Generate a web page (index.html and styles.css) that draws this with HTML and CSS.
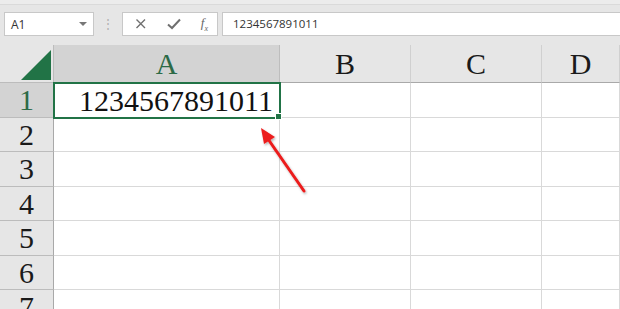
FILE: index.html
```html
<!DOCTYPE html>
<html lang="en">
<head>
  <meta charset="UTF-8" />
  <title>Sheet</title>
  <link rel="stylesheet" href="styles.css">
</head>
<body>
  <div class="toolbar">
    <div class="name-box">
      <span>A1</span>
      <span class="caret"></span>
    </div>
    <div class="grip">&#8942;</div>
    <div class="fx-buttons">
      <svg class="fx-icon" width="14" height="14" viewBox="0 0 14 14">
        <path d="M2.5 2.5 L11 11 M11 2.5 L2.5 11" stroke="#6f6f6f" stroke-width="1.4" fill="none"/>
      </svg>
      <svg class="fx-icon" width="16" height="14" viewBox="0 0 16 14">
        <path d="M2 7.5 L6 11 L14 2.5" stroke="#6f6f6f" stroke-width="2" fill="none"/>
      </svg>
      <span class="fx-text">f<sub>x</sub></span>
    </div>
    <div class="formula-input">1234567891011</div>
  </div>

  <div class="sheet">
    <div class="grid">
      <div class="corner"><span class="corner-tri"></span></div>
      <div class="col-head selected">A</div>
      <div class="col-head">B</div>
      <div class="col-head">C</div>
      <div class="col-head">D</div>

      <div class="row-head selected">1</div>
      <div class="cell active">1234567891011</div>
      <div class="cell"></div><div class="cell"></div><div class="cell"></div>

      <div class="row-head">2</div>
      <div class="cell"></div><div class="cell"></div><div class="cell"></div><div class="cell"></div>
      <div class="row-head">3</div>
      <div class="cell"></div><div class="cell"></div><div class="cell"></div><div class="cell"></div>
      <div class="row-head">4</div>
      <div class="cell"></div><div class="cell"></div><div class="cell"></div><div class="cell"></div>
      <div class="row-head">5</div>
      <div class="cell"></div><div class="cell"></div><div class="cell"></div><div class="cell"></div>
      <div class="row-head">6</div>
      <div class="cell"></div><div class="cell"></div><div class="cell"></div><div class="cell"></div>
      <div class="row-head">7</div>
      <div class="cell"></div><div class="cell"></div><div class="cell"></div><div class="cell"></div>
    </div>

    <!-- red annotation arrow -->
    <svg class="arrow" width="620" height="264" viewBox="0 0 620 264">
      <defs>
        <filter id="shadow" x="-20%" y="-20%" width="140%" height="140%">
          <feDropShadow dx="1" dy="1.5" stdDeviation="1" flood-color="#000" flood-opacity="0.3"/>
        </filter>
      </defs>
      <g filter="url(#shadow)">
        <line x1="304" y1="146" x2="268" y2="94" stroke="#ec1c1c" stroke-width="3" stroke-linecap="round"/>
        <polygon points="261,83 275,92 264,99" fill="#ec1c1c"/>
      </g>
    </svg>
  </div>
</body>
</html>
```

FILE: styles.css
```css
:root {
  --green: #217346;
  --head: #e6e6e6;
  --head-sel: #d3d3d3;
  --line: #d9d9d9;
  --head-line: #bcbcbc;
}

body {
  margin: 0;
  width: 620px;
  height: 309px;
  overflow: hidden;
  background: var(--head);
  font-family: 'Liberation Serif', 'Times New Roman', serif;
}

.toolbar {
  height: 45px;
  box-sizing: border-box;
  border-top: 4px solid #ececec;
  box-shadow: inset 0 1px 0 #dadada;
  padding: 8px 0 0 4px;
  display: flex;
  align-items: flex-start;
  font-family: 'Open Sans', 'Liberation Sans', sans-serif;
}

.name-box {
  width: 90px;
  height: 24px;
  box-sizing: border-box;
  background: #fff;
  border: 1px solid #c8c8c8;
  display: flex;
  align-items: center;
  justify-content: space-between;
  padding: 0 6px 0 6px;
  font-size: 12px;
  color: #333;
}

.caret {
  width: 0;
  height: 0;
  border-left: 4px solid transparent;
  border-right: 4px solid transparent;
  border-top: 4px solid #777;
}

.grip {
  width: 28px;
  height: 24px;
  text-align: center;
  line-height: 24px;
  color: #b0b0b0;
  font-size: 12px;
}

.fx-buttons {
  width: 96px;
  height: 24px;
  box-sizing: border-box;
  background: #fff;
  border: 1px solid #c8c8c8;
  display: flex;
  align-items: center;
  justify-content: space-between;
  padding: 0 9px 0 11px;
}

.fx-text {
  font-family: 'Liberation Serif', serif;
  font-style: italic;
  font-size: 13px;
  color: #666;
  line-height: 1;
}

.fx-text sub {
  font-size: 8px;
}

.formula-input {
  flex: 1;
  margin-left: 4px;
  height: 24px;
  box-sizing: border-box;
  background: #fff;
  border: 1px solid #c8c8c8;
  border-right: none;
  padding-left: 10px;
  line-height: 22px;
  font-size: 11.5px;
  color: #333;
}

.sheet {
  position: relative;
}

.grid {
  display: grid;
  grid-template-columns: 54px 226px 131px 131px 1fr;
  grid-template-rows: 38px 35px 34px 35px 34px 35px 34px 35px;
  background: #fff;
}

.corner {
  background: var(--head);
  border-right: 1px solid var(--head-line);
  border-bottom: 1px solid var(--head-line);
  position: relative;
}

.corner-tri {
  position: absolute;
  right: 2px;
  bottom: 2px;
  width: 0;
  height: 0;
  border-left: 30px solid transparent;
  border-bottom: 30px solid var(--green);
}

.col-head {
  background: var(--head);
  border-right: 1px solid #d0d0d0;
  border-bottom: 1px solid #a9a9a9;
  text-align: center;
  font-size: 30px;
  line-height: 38px;
  color: #1a1a1a;
}

.col-head.selected {
  background: var(--head-sel);
  color: #2c6a46;
  border-right-color: #bdbdbd;
}

.row-head {
  background: var(--head);
  border-right: 1px solid #a9a9a9;
  border-bottom: 1px solid var(--head-line);
  text-align: center;
  font-size: 30px;
  line-height: 34px;
  color: #1a1a1a;
}

.row-head.selected {
  background: var(--head-sel);
  color: #2c6a46;
}

.cell {
  border-right: 1px solid var(--line);
  border-bottom: 1px solid var(--line);
}

.cell.active {
  position: relative;
  outline: 2px solid var(--green);
  outline-offset: -1px;
  text-align: right;
  padding-right: 6px;
  font-size: 30px;
  line-height: 35px;
  color: #111;
}

.cell.active::after {
  content: '';
  position: absolute;
  right: -3px;
  bottom: -3px;
  width: 5px;
  height: 5px;
  background: var(--green);
  border: 1px solid #fff;
}

.arrow {
  position: absolute;
  left: 0;
  top: 0;
  pointer-events: none;
}
```
